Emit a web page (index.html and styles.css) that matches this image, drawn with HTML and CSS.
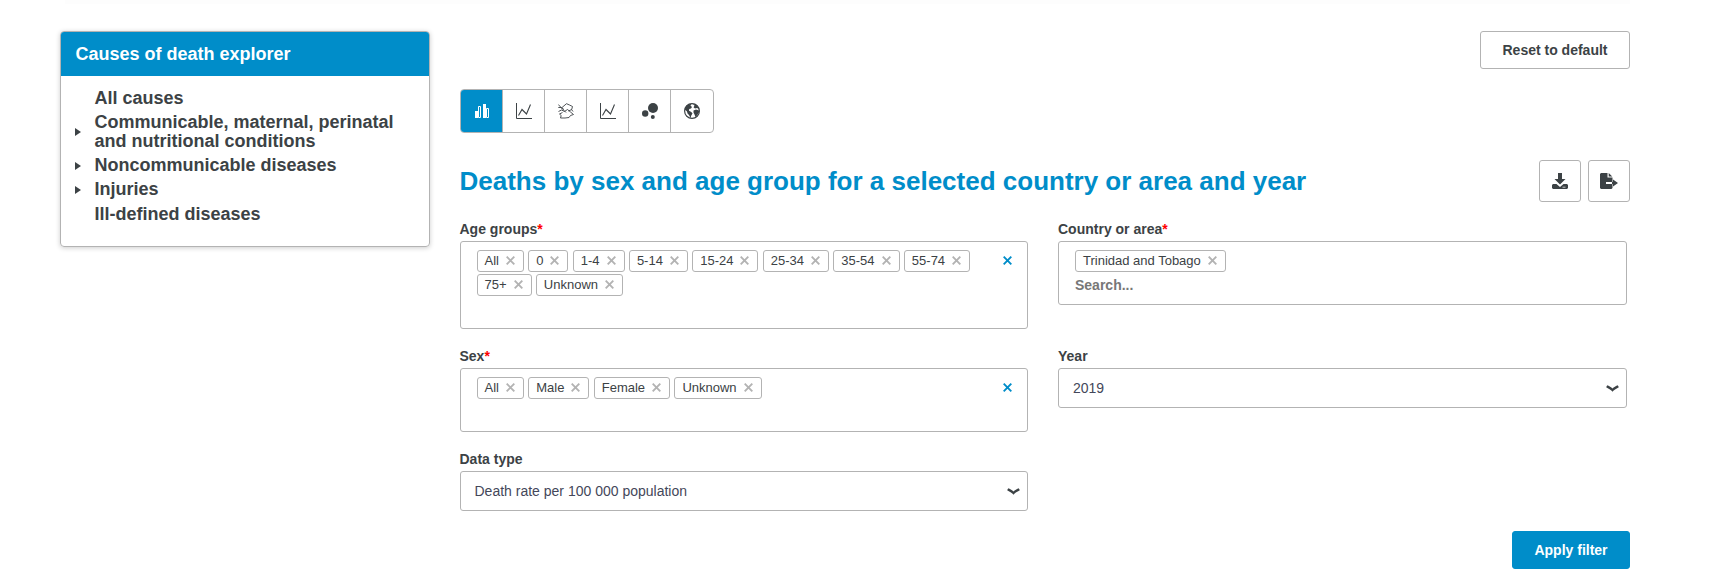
FILE: index.html
```html
<!DOCTYPE html>
<html lang="en">
<head>
<meta charset="utf-8">
<title>Causes of death explorer</title>
<link rel="stylesheet" href="styles.css">
</head>
<body>
<svg class="defs" width="0" height="0"><symbol id="x" viewBox="0 0 9 9"><path d="M.7.7l7.6 7.6M8.3.7L.7 8.3" fill="none" stroke="currentColor" stroke-width="1.9"/></symbol>
<symbol id="line" viewBox="0 0 16 16"><path d="M.5 0v15.5H16" fill="none" stroke="currentColor"/><path d="M2.5 12.5l3.5-6 4.5 4.5 4-9.5" fill="none" stroke="currentColor" stroke-width="1.1"/></symbol>
<symbol id="chev" viewBox="0 0 13 7"><path d="M.7 1.2C3 2.5 4.8 3.3 6.5 5 8.2 3.3 10 2.5 12.3 1.2" fill="none" stroke="currentColor" stroke-width="2.4"/></symbol></svg>
<div class="topband"></div>
<div class="page">
  <aside class="panel">
    <h2 class="panel-title">Causes of death explorer</h2>
    <ul class="tree">
      <li>All causes</li>
      <li class="branch">Communicable, maternal, perinatal and nutritional conditions</li>
      <li class="branch">Noncommunicable diseases</li>
      <li class="branch">Injuries</li>
      <li>Ill-defined diseases</li>
    </ul>
  </aside>
  <main class="main">
    <div class="top"><button class="btn reset">Reset to default</button></div>
    <div class="tabs">
      <span class="tab active"><svg width="14" height="14" viewBox="0 0 14 14"><path d="M0 7h3v7H0zM8 0h3v14H8z" fill="currentColor"/><path d="M3.5 2.5h2v11h-2zM11.5 4.5h2v9h-2z" fill="none" stroke="currentColor"/></svg></span>
      <span class="tab"><svg width="16" height="16"><use href="#line"/></svg></span>
      <span class="tab"><svg width="16" height="16" viewBox="0 0 16 16" fill="none" stroke="currentColor" stroke-width=".9" stroke-linejoin="round"><path d="M.3 1.500L3.500 5 6 2.800 8.500.7l3 1.300 3 1.500-.8 3L10.500 8M.3 4.500h3L6 6.500M.5 8.500L3.500 7l3 1.500 3-2L12.500 9l3 2.500-3 1-1.500 2-4 .5H2.500L3.200 12.500 1.500 11l3-1.500M3.500 5L8 9.500M13.500 6.500L15 8.500"/></svg></span>
      <span class="tab"><svg width="16" height="16"><use href="#line"/></svg></span>
      <span class="tab"><svg width="16" height="16" viewBox="0 0 16 16" fill="currentColor"><circle cx="11" cy="5" r="5"/><circle cx="3.200" cy="10.500" r="3.200"/><circle cx="10.800" cy="14" r="2"/></svg></span>
      <span class="tab"><svg width="16" height="16" viewBox="0 0 16 16"><circle cx="8" cy="8" r="7.400" fill="none" stroke="currentColor" stroke-width="1.200"/><path d="M.8 6.500C1.500 3 4 1 7.500.8L6.500 2.500 8 4 7 5.500 5.200 6 5 7.800l2.300 1.200 1.200 1.500L7.300 12.500 6.500 15 5 12 3.500 10.500 3 8.500zM9 .8l3.500 1.200 2.500 4-2-1-2 .5L9.500 4.200l1-1.500zM9.500 7.500l2.500-1 3 1v2l-2 3-1.500 1.500-1-2.500L9.500 9.500z" fill="currentColor"/></svg></span>
    </div>
    <div class="heading">
      <h1>Deaths by sex and age group for a selected country or area and year</h1>
      <div class="actions">
        <button class="icon-btn"><svg width="16" height="16" viewBox="0 0 16 16"><path d="M6 0h4v6h3.500L8 11.500 2.500 6H6z" fill="currentColor"/><path d="M1 11h3.500L8 14l3.500-3H15l1 1v3l-1 1H1l-1-1v-3z" fill="currentColor"/><path d="M10.500 14.200h3" stroke="#fff" stroke-width=".7"/></svg></button>
        <button class="icon-btn"><svg width="18" height="16" viewBox="0 0 18 16"><path d="M1 0h6.500v4.500h5V9H6v2h6.500v4l-1 1H1l-1-1V1zM8.700 0l3.600 3.500H8.700zM13 9V6.500l5 3.500-5 3.500V11h-1V9z" fill="currentColor"/></svg></button>
      </div>
    </div>
    <form class="filters">
      <div class="field">
        <label>Age groups<b>*</b></label>
        <div class="box multi age"><div class="tags">
          <span class="tag">All<svg><use href="#x"/></svg></span><span class="tag">0<svg><use href="#x"/></svg></span><span class="tag">1-4<svg><use href="#x"/></svg></span><span class="tag">5-14<svg><use href="#x"/></svg></span><span class="tag">15-24<svg><use href="#x"/></svg></span><span class="tag">25-34<svg><use href="#x"/></svg></span><span class="tag">35-54<svg><use href="#x"/></svg></span><span class="tag">55-74<svg><use href="#x"/></svg></span><span class="tag">75+<svg><use href="#x"/></svg></span><span class="tag">Unknown<svg><use href="#x"/></svg></span>
        </div><svg class="clear"><use href="#x"/></svg></div>
      </div>
      <div class="field">
        <label>Country or area<b>*</b></label>
        <div class="box multi"><div class="tags">
          <span class="tag">Trinidad and Tobago<svg><use href="#x"/></svg></span>
          <span class="search">Search...</span>
        </div></div>
      </div>
      <div class="field">
        <label>Sex<b>*</b></label>
        <div class="box multi"><div class="tags">
          <span class="tag">All<svg><use href="#x"/></svg></span><span class="tag">Male<svg><use href="#x"/></svg></span><span class="tag">Female<svg><use href="#x"/></svg></span><span class="tag">Unknown<svg><use href="#x"/></svg></span>
        </div><svg class="clear"><use href="#x"/></svg></div>
      </div>
      <div class="field">
        <label>Year</label>
        <div class="box select"><span>2019</span><svg width="13" height="7"><use href="#chev"/></svg></div>
      </div>
      <div class="field">
        <label>Data type</label>
        <div class="box select"><span>Death rate per 100 000 population</span><svg width="13" height="7"><use href="#chev"/></svg></div>
      </div>
    </form>
    <div class="submit"><button type="button" class="btn apply">Apply filter</button></div>
  </main>
</div>
</body>
</html>
```
FILE: styles.css
```css
* { box-sizing: border-box; }
body { margin: 0; background: #fff; color: #3c4245; font-family: "Liberation Sans", Arial, sans-serif; font-size: 14px; }
.defs { display: block; height: 0; }
.topband { height: 4px; margin: 0 99px 27px 65px; background: #fdfdfd; }
.page { display: flex; align-items: flex-start; gap: 30px; padding-left: 59.5px; }
.panel { width: 370px; height: 216px; border: 1px solid #b3b3b3; border-radius: 4px; box-shadow: 0 1px 5px rgba(0,0,0,.2); overflow: hidden; }
.panel-title { margin: 0; height: 44px; padding-left: 15px; background: #008dc9; color: #fff; font-size: 18px; line-height: 44px; }
.tree { margin: 0; padding: 13px 15px 0; list-style: none; font-size: 18px; font-weight: bold; line-height: 19px; }
.tree li { display: flex; align-items: center; padding-left: 19px; margin-bottom: 5px; }
.tree li:last-child { margin-top: 6px; }
.branch::before { content: ""; width: 0; height: 0; margin: 0 13.5px 0 -19.5px; border-left: 6px solid #3c4245; border-top: 4px solid transparent; border-bottom: 4px solid transparent; }
.main { width: 1170.5px; }
.top, .submit { display: flex; justify-content: flex-end; }
.btn { height: 38px; padding: 0; border: 1px solid #b3b3b3; border-radius: 3px; background: #fff; color: #3c4245; font: bold 14px "Liberation Sans", Arial, sans-serif; }
.reset { width: 150px; }
.apply { width: 118px; background: #008dc9; border-color: #008dc9; color: #fff; }
.tabs { display: flex; width: 254px; height: 44px; margin-top: 20px; border: 1px solid #b3b3b3; border-radius: 4px; overflow: hidden; }
.tab { display: flex; align-items: center; justify-content: center; width: 42px; padding-left: 1px; border-left: 1px solid #b3b3b3; }
.tab:first-child { width: 41px; border-left: 0; }
.tab:last-child { width: 43px; padding-left: 0; }
.active { background: #008dc9; color: #fff; }
.heading { display: flex; justify-content: space-between; margin-top: 27px; }
h1 { margin: 0; color: #008dc9; font-size: 26px; line-height: 42px; white-space: nowrap; }
.actions { display: flex; gap: 7px; }
.icon-btn { display: flex; align-items: center; justify-content: center; width: 42px; height: 42px; padding: 0; border: 1px solid #b3b3b3; border-radius: 3px; background: #fff; color: #3c4245; }
.filters { display: grid; grid-template-columns: 568.5px 569px; grid-template-rows: 127px 103px 80px; column-gap: 30px; padding-top: 19px; }
.field label { display: block; height: 20px; line-height: 17px; font-weight: bold; }
.field label b { color: #f00; }
.box { display: flex; justify-content: space-between; border: 1px solid #b3b3b3; border-radius: 3px; }
.multi { height: 64px; padding: 8px 15px 8px 16px; }
.age { height: 88px; }
.tags { display: flex; flex-wrap: wrap; align-content: flex-start; gap: 2px 4.3px; width: 500px; }
.tag { display: flex; align-items: center; height: 22px; padding: 0 8px 1px 7px; border: 1px solid #b3b3b3; border-radius: 3px; font-size: 13px; white-space: nowrap; }
.tag svg { width: 9px; height: 9px; margin-left: 7px; color: #b3b3b3; }
.clear { width: 9px; height: 9px; margin-top: 6px; color: #008dc9; }
.search { width: 100%; color: #777; font-weight: bold; line-height: 22px; }
.select { align-items: center; height: 40px; padding: 0 7px 0 14px; color: #44475a; }
.select svg { color: #3c4245; }
```
